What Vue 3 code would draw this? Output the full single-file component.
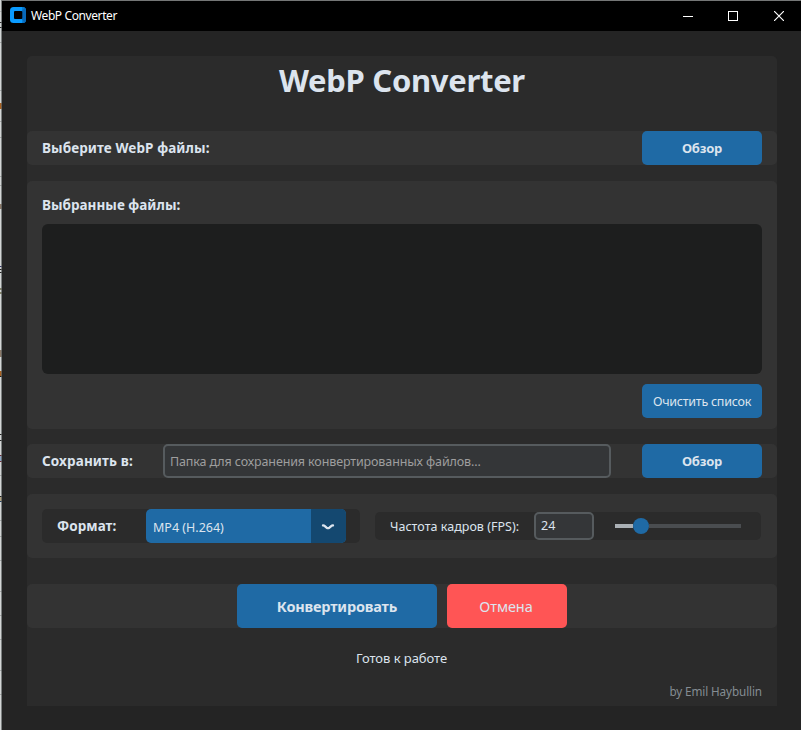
<script setup>
import { ref } from 'vue'

const folder = ref('')
const fps = ref('24')
const marks = [
  [11, 1, '#b4b7b7'], [22, 1, '#333'], [27, 1, '#333'], [42, 1, '#a9acac'], [90, 1, '#a9acac'],
  [103, 6, '#a9611f'], [121, 1, '#a9acac'], [137, 1, '#a9acac'], [176, 1, '#a9acac'], [185, 1, '#a9acac'],
  [204, 5, '#8b7968'], [266, 1, '#35356f'], [269, 1, '#222'], [272, 1, '#222'], [288, 2, '#85856b'],
  [292, 2, '#85856b'], [350, 7, '#8b7968'], [371, 6, '#a9611f'], [376, 1, '#222'], [434, 1, '#222'],
  [440, 1, '#222'], [455, 1, '#702a38'], [456, 5, '#8faac8'], [461, 1, '#702a38'], [475, 1, '#a9acac'],
  [496, 1, '#222'], [497, 4, '#b5a582'], [501, 1, '#223f60'], [520, 1, '#a9acac'], [536, 1, '#a9acac'],
  [560, 1, '#a9acac'], [591, 1, '#a9acac'], [615, 1, '#a9acac'], [639, 1, '#a9acac'], [670, 1, '#a9acac'], [694, 1, '#a9acac'],
]
</script>

<template>
  <div class="screen">
    <svg class="edge" width="2" height="730" shape-rendering="crispEdges">
      <rect width="2" height="730" fill="#d3d6d6" />
      <rect v-for="m in marks" :key="m[0]" x="0" :y="m[0]" width="2" :height="m[1]" :fill="m[2]" />
      <rect x="1" width="1" height="730" fill="#5c5f5f" fill-opacity=".72" />
    </svg>
    <div class="window">
      <header class="titlebar">
        <svg class="logo" width="16" height="16" viewBox="0 0 16 16">
          <rect width="16" height="16" rx="3.5" fill="#0a9bff" />
          <path d="M12 0h.5A3.5 3.5 0 0 1 16 3.5v9a3.5 3.5 0 0 1-3.5 3.5H12z" fill="#0868b8" />
          <path d="M12 0L14.5 1 12 4zM12 12l2 3-2 1z" fill="#087fd6" />
          <rect x="4" y="4" width="8.3" height="8" rx="1" fill="#000" />
        </svg>
        <span class="caption">WebP Converter</span>
        <div class="controls">
          <svg width="10" height="10" viewBox="0 0 10 10" shape-rendering="crispEdges"><path d="M0 5.5h10" stroke="#fff" /></svg>
          <svg width="10" height="10" viewBox="0 0 10 10" shape-rendering="crispEdges"><rect x=".5" y=".5" width="9" height="9" fill="none" stroke="#fff" /></svg>
          <svg class="close" width="10" height="10" viewBox="0 0 10 10"><path d="M0 0l10 10M10 0L0 10" stroke="#fff" stroke-width="1.15" /></svg>
        </div>
      </header>
      <main class="panel">
        <h1>WebP Converter</h1>

        <section class="row source">
          <span class="label pick">Выберите WebP файлы:</span>
          <button class="btn bold browse">Обзор</button>
        </section>

        <section class="files">
          <span class="label chosen">Выбранные файлы:</span>
          <div class="list"></div>
          <button class="btn clear">Очистить список</button>
        </section>

        <section class="row">
          <span class="label save">Сохранить в:</span>
          <input v-model="folder" class="field folder" placeholder="Папка для сохранения конвертированных файлов..." />
          <button class="btn bold browse">Обзор</button>
        </section>

        <section class="options">
          <div class="format">
            <span class="label fmt">Формат:</span>
            <div class="select">
              <span class="value">MP4 (H.264)</span>
              <span class="arrow">
                <svg width="14" height="8" viewBox="0 0 14 8"><path d="M2 2.4L3.2 2.6L5.6 4.7Q7 5.5 8.4 4.7L10.8 2.6L12 2.4" fill="none" stroke="#dce4ee" stroke-width="2.3" stroke-linecap="round" stroke-linejoin="round" /></svg>
              </span>
            </div>
          </div>
          <div class="rate">
            <span class="rate-label">Частота кадров (FPS):</span>
            <input v-model="fps" class="field fps" />
            <div class="slider"><i class="filled"></i><i class="knob"></i><i class="rest"></i></div>
          </div>
        </section>

        <section class="actions">
          <button class="btn convert">Конвертировать</button>
          <button class="btn cancel">Отмена</button>
        </section>

        <p class="status">Готов к работе</p>
        <p class="author">by Emil Haybullin</p>
      </main>
    </div>
  </div>
</template>

<style>
body { background: #242424; overflow: hidden; }
</style>

<style scoped>
* { box-sizing: border-box; }
.screen { display: flex; width: 801px; height: 730px; font-family: "Noto Sans", "Open Sans", sans-serif; color: #dce4ee; white-space: nowrap; }
.edge { display: block; flex: none; }
.window { flex: 1; background: #242424; border-top: 1px solid #747676; }
.titlebar { height: 30px; background: #000; display: flex; align-items: center; padding: 0 17px 0 8px; }
.logo { flex: none; margin-top: -2px; }
.caption { margin-left: 5px; font-size: 12px; letter-spacing: -.4px; color: #fff; line-height: 30px; }
.controls { margin-left: auto; display: flex; gap: 35px; margin-top: -1px; }
.controls svg { display: block; }
.controls .close { margin-left: 1px; }
.panel { margin: 25px 24px 0 25px; width: 750px; height: 650px; background: #2b2b2b; border-radius: 5px 5px 0 0; display: flex; flex-direction: column; }
h1 { margin: 0; height: 75px; font-size: 31px; line-height: 48px; font-weight: 700; letter-spacing: -.3px; text-align: center; }
section { background: #333; border-radius: 5px; flex: none; }
.row { height: 34px; padding: 0 15px; display: flex; align-items: center; }
.source { margin-bottom: 16px; }
.label { font-size: 13.5px; font-weight: 700; line-height: 20px; }
.pick { letter-spacing: .1px; }
.chosen { letter-spacing: .02px; }
.save { letter-spacing: .13px; width: 121px; }
.fmt { letter-spacing: .05px; width: 89px; }
.btn { border: 0; padding: 0; border-radius: 5px; background: #1f6aa5; color: #dce4ee; font-family: inherit; width: 120px; height: 34px; font-size: 12.5px; }
.bold { font-size: 13px; font-weight: 700; letter-spacing: -.2px; padding-bottom: 1px; }
.browse { margin-left: auto; }
.files { height: 248px; padding: 14px 15px 0; margin-bottom: 15px; display: flex; flex-direction: column; }
.list { height: 150px; margin: 9px 0 10px; border-radius: 6px; background: #1d1e1e; }
.clear { align-self: flex-end; letter-spacing: -.25px; }
.field { background: #343638; border: 2px solid #565b5e; border-radius: 5px; outline: 0; color: #dce4ee; font-family: inherit; font-size: 12.5px; padding: 0 5px; }
.folder { width: 448px; height: 34px; letter-spacing: -.12px; }
.folder::placeholder { color: #9e9e9e; opacity: 1; }
.options { height: 64px; margin-top: 16px; padding: 0 15px; display: flex; align-items: center; gap: 15px; }
.format { width: 318px; height: 34px; background: #2b2b2b; border-radius: 5px; padding-left: 15px; display: flex; align-items: center; }
.select { width: 200px; height: 34px; border-radius: 5px; overflow: hidden; background: #1f6aa5; display: flex; }
.value { width: 165px; padding-left: 7px; font-size: 12.5px; line-height: 38px; letter-spacing: 0; }
.arrow { flex: 1; background: #144870; display: flex; align-items: center; justify-content: center; padding: 2px 2px 0 0; }
.rate { width: 386px; height: 28px; background: #2b2b2b; border-radius: 5px; display: flex; align-items: center; padding-left: 15px; }
.rate-label { width: 144px; font-size: 12.5px; letter-spacing: .03px; line-height: 26px; padding-top: 2px; }
.fps { width: 60px; height: 28px; padding-bottom: 2px; }
.slider { margin-left: 21px; width: 126px; display: flex; align-items: center; }
.filled { width: 18px; height: 4px; background: #aab0b5; }
.knob { width: 16px; height: 16px; border-radius: 50%; background: #1f6aa5; }
.rest { flex: 1; height: 4px; background: #4a4d50; }
.actions { height: 44px; margin-top: 26px; display: flex; justify-content: center; gap: 10px; }
.convert { width: 200px; height: 44px; font-size: 14.5px; font-weight: 700; letter-spacing: -.18px; }
.cancel { height: 44px; font-size: 14.5px; letter-spacing: -.1px; padding-right: 2px; background: #ff5555; }
.status { margin: 20px 0 0; padding-right: 1px; font-size: 13px; line-height: 20px; text-align: center; letter-spacing: -.05px; }
.author { margin: 14px 15px 0 0; font-size: 11.7px; line-height: 18px; text-align: right; color: #858d93; letter-spacing: -.1px; }
</style>
